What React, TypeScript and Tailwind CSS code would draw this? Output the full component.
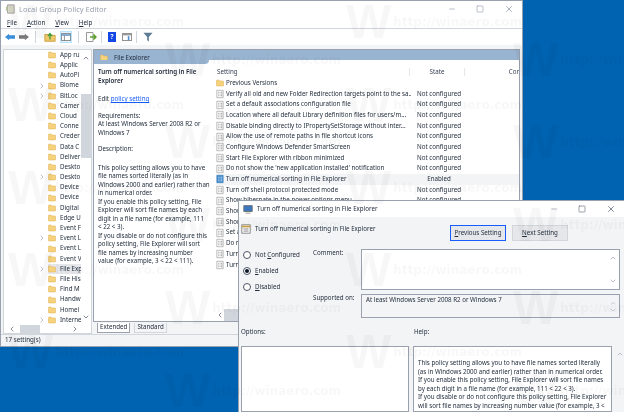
import React from 'react';
import { ChevronDown, ChevronLeft, ChevronRight, ChevronUp, Minus, Square, X } from 'lucide-react';

const treeItems = [
  ['App ru', false], ['Applic', false], ['AutoPl', false], ['Biome', true], ['BitLoc', true], ['Camer', false],
  ['Cloud', false], ['Conne', false], ['Creder', false], ['Data C', false], ['Deliver', false], ['Deskto', false],
  ['Deskto', true], ['Device', false], ['Device', false], ['Digital', false], ['Edge U', false], ['Event F', false],
  ['Event L', true], ['Event L', false], ['Event V', false], ['File Exp', true], ['File His', false], ['Find M', false],
  ['Handw', false], ['Homel', false], ['Interne', true],
] as const;

const settings = [
  ['Verify all old and new Folder Redirection targets point to the sa...', 'Not configured'],
  ['Set a default associations configuration file', 'Not configured'],
  ['Location where all default Library definition files for users/m...', 'Not configured'],
  ['Disable binding directly to IPropertySetStorage without inter...', 'Not configured'],
  ['Allow the use of remote paths in file shortcut icons', 'Not configured'],
  ['Configure Windows Defender SmartScreen', 'Not configured'],
  ['Start File Explorer with ribbon minimized', 'Not configured'],
  ["Do not show the 'new application installed' notification", 'Not configured'],
  ['Turn off numerical sorting in File Explorer', 'Enabled'],
  ['Turn off shell protocol protected mode', 'Not configured'],
  ['Show hibernate in the power options menu', 'Not configured'],
  ['Show lock in the user picture menu', 'Not configured'],
  ['Show sleep in the power options menu', 'Not configured'],
  ['Set a support web page link', 'Not configured'],
  ['Do not track Shell shortcuts during roaming', 'Not configured'],
  ['Turn off caching of thumbnail pictures', 'Not configured'],
  ['Turn off Windows Libraries features', 'Not configured'],
];

const helpLines = [
  'This policy setting allows you to have file names sorted literally',
  '(as in Windows 2000 and earlier) rather than in numerical order.',
  'If you enable this policy setting, File Explorer will sort file names',
  'by each digit in a file name (for example, 111 < 22 < 3).',
  'If you disable or do not configure this policy setting, File Explorer',
  'will sort file names by increasing number value (for example, 3 <',
  '22 < 111).',
];

const descLines = [
  'This policy setting allows you to have',
  'file names sorted literally (as in',
  'Windows 2000 and earlier) rather than',
  'in numerical order.',
  'If you enable this policy setting, File',
  'Explorer will sort file names by each',
  'digit in a file name (for example, 111',
  '< 22 < 3).',
  'If you disable or do not configure this',
  'policy setting, File Explorer will sort',
  'file names by increasing number',
  'value (for example, 3 < 22 < 111).',
];

function Folder({ className = 'w-2 h-2' }: { className?: string }) {
  return (
    <svg viewBox="0 0 16 14" className={`${className} shrink-0`}>
      <path d="M1 2.5 Q1 1 2.500 1 H6 L8 3 H14 Q15 3 15 4 V12 Q15 13 14 13 H2 Q1 13 1 12 Z" fill="#f6d27c" stroke="#dcae52" strokeWidth="1" />
    </svg>
  );
}

function PolicyIcon({ active }: { active?: boolean }) {
  return (
    <svg viewBox="0 0 14 16" className="w-2 h-2.5 shrink-0">
      <path d="M1.500 1.500 H12.500 V14.500 H1.500 Z" fill={active ? '#4a90d0' : '#fff'} stroke={active ? '#2a6fb0' : '#8a8a8a'} />
      <path d="M4 5 H6 M8 5 H11 M4 8 H6 M8 8 H11 M4 11 H6 M8 11 H11" stroke={active ? '#fff' : '#555'} />
    </svg>
  );
}

function Toolbar() {
  return (
    <div className="flex items-center h-4 pl-1 gap-1 bg-white">
      <svg viewBox="0 0 12 10" className="w-2.5 h-2.5"><path d="M0 5 L5 1 V3 H12 V7 H5 V9 Z" fill="#3a8fd8" /></svg>
      <svg viewBox="0 0 12 10" className="w-2.5 h-2.5"><path d="M12 5 L7 1 V3 H0 V7 H7 V9 Z" fill="#7a7a7a" /></svg>
      <div className="w-px h-3 bg-gray-300 ml-0.5" />
      <svg viewBox="0 0 14 12" className="w-3 h-3 ml-1"><path d="M1 3 H6 L7 4 H13 V11 H1 Z" fill="#f0c869" stroke="#c99a3a" /><path d="M7 9 V3 M4.500 5 L7 2 L9.500 5" stroke="#3d9a3d" strokeWidth="1.500" fill="none" /></svg>
      <div className="flex items-center justify-center w-3 h-3 bg-sky-100 border border-sky-200">
        <svg viewBox="0 0 12 10" className="w-2.5 h-2"><rect x="0.500" y="0.500" width="11" height="9" fill="#fff" stroke="#777" /><path d="M0 2.500 H12" stroke="#6a9bc8" strokeWidth="2" /><path d="M4 3 V10" stroke="#777" /></svg>
      </div>
      <div className="w-px h-3 bg-gray-300 ml-0.5" />
      <svg viewBox="0 0 12 12" className="w-3 h-3 ml-0.5"><path d="M1.500 1.500 H8 V10.500 H1.500 Z" fill="#fff" stroke="#999" /><path d="M5 6 H11 M8.500 3.500 L11 6 L8.500 8.500" stroke="#5aa02c" strokeWidth="1.500" fill="none" /></svg>
      <div className="w-px h-3 bg-gray-300" />
      <div className="flex items-center justify-center w-2 h-2.5 bg-blue-700 text-white font-bold ml-0.5">?</div>
      <svg viewBox="0 0 12 10" className="w-2.5 h-2 ml-0.5"><rect x="0.500" y="0.500" width="11" height="9" fill="#fff" stroke="#777" /><path d="M0 2 H12" stroke="#999" strokeWidth="2" /><path d="M8 4 V9" stroke="#4a90d0" strokeWidth="2" /></svg>
      <div className="w-px h-3 bg-gray-300" />
      <svg viewBox="0 0 12 12" className="w-2.5 h-2.5 ml-0.5"><path d="M0.500 1 H11.500 L7 6 V11.500 L5 10 V6 Z" fill="#5f7c96" /></svg>
    </div>
  );
}

function Tree() {
  return (
    <div className="flex flex-col w-[89px] bg-white border border-gray-300">
      <div className="flex flex-1 min-h-0">
        <div className="flex flex-col flex-1 min-w-0">
          {treeItems.map(([name, expandable], i) => (
            <div key={i} className="flex flex-1 items-center min-h-0">
              <div className="flex items-center justify-center w-11 pl-8 shrink-0">
                {expandable && <ChevronRight className="w-2 h-2 text-gray-400" />}
              </div>
              <div className={`flex items-center gap-1 flex-1 overflow-hidden whitespace-nowrap h-2.5 ${name === 'File Exp' ? 'bg-gray-200' : ''}`}>
                <Folder />
                <span>{name}</span>
              </div>
            </div>
          ))}
        </div>
        <div className="flex flex-col items-center w-2.5 bg-white text-gray-600">
          <ChevronUp className="w-2 h-2 mt-1" />
          <div className="w-2.5 h-16 mt-8 bg-gray-300" />
          <div className="flex-1" />
          <ChevronDown className="w-2 h-2 mb-1" />
        </div>
      </div>
      <div className="flex items-center h-2 text-gray-600 bg-white">
        <ChevronLeft className="w-2 h-2 ml-1" />
        <div className="w-5 h-2 ml-1 bg-gray-300" />
        <div className="flex-1" />
        <ChevronRight className="w-2 h-2 mr-3" />
      </div>
    </div>
  );
}

function Description() {
  return (
    <div className="flex flex-col w-[122px] shrink-0 pl-1 pt-2 text-gray-800 whitespace-nowrap">
      <p className="font-semibold">Turn off numerical sorting in File</p>
      <p className="font-semibold">Explorer</p>
      <p className="mt-2.5">Edit <span className="text-blue-600 underline">policy setting</span></p>
      <p className="mt-2">Requirements:</p>
      <p>At least Windows Server 2008 R2 or</p>
      <p>Windows 7</p>
      <p className="mt-2">Description:</p>
      <div className="mt-2.5">
        {descLines.map((line) => (
          <p key={line}>{line}</p>
        ))}
      </div>
    </div>
  );
}

function SettingsList() {
  return (
    <div className="flex flex-col flex-1 min-w-0">
      <div className="flex items-center h-3 mt-1.5 text-gray-700">
        <span className="w-[195px] pl-px">Setting</span>
        <span className="w-14 text-center border-x border-gray-200">State</span>
        <span className="pl-11">Cor</span>
      </div>
      <div className="flex flex-col h-48">
        <div className="flex flex-1 items-center gap-0.5 min-h-0">
          <Folder />
          <span>Previous Versions</span>
        </div>
        {settings.map(([name, state]) => {
          const active = state === 'Enabled';
          return (
            <div key={name} className={`flex flex-1 items-center min-h-0 whitespace-nowrap ${active ? 'bg-gray-100' : ''}`}>
              <PolicyIcon active={active} />
              <span className="w-[187px] pl-0.5 overflow-hidden">{name}</span>
              <span className="w-14 text-center">{state}</span>
            </div>
          );
        })}
      </div>
      <div className="flex-1" />
      <div className="flex items-center h-3 text-gray-600">
        <ChevronLeft className="w-2 h-2" />
        <div className="w-16 h-3 bg-gray-300" />
      </div>
    </div>
  );
}

function MainWindow() {
  return (
    <div className="absolute left-0 top-0 flex flex-col w-[523px] h-[347px] bg-gray-100 border border-gray-400 text-gray-800">
      <div className="flex items-center h-4 pl-1 gap-1 bg-white">
        <svg viewBox="0 0 12 12" className="w-2.5 h-2.5"><path d="M3 1 H11 V11 H3 Z" fill="#d8d8c8" stroke="#999" /><path d="M1 3 H3 V8 H1 Z" fill="#b8c8a0" /></svg>
        <span className="flex-1 text-gray-400 text-[7.5px]">Local Group Policy Editor</span>
        <Minus className="w-2 h-2 mr-4 text-gray-400" />
        <Square className="w-2 h-2 mr-4 text-gray-400" />
        <X className="w-2.5 h-2.5 mr-2 text-gray-400" />
      </div>
      <div className="flex items-center h-3 pl-1.5 pt-0.5 gap-2.5 bg-white border-b border-gray-300">
        <span><u>F</u>ile</span>
        <span><u>A</u>ction</span>
        <span><u>V</u>iew</span>
        <span><u>H</u>elp</span>
      </div>
      <Toolbar />
      <div className="flex flex-1 min-h-0 gap-px px-0.5 pt-1">
        <Tree />
        <div className="flex flex-col flex-1 min-w-0">
          <div className="flex flex-col flex-1 min-h-0 bg-white border border-gray-400">
            <div className="flex items-center h-2.5 bg-[#99b4d1]">
              <div className="flex items-center gap-1.5 pl-1.5 pt-1.5">
                <Folder />
                <span>File Explorer</span>
              </div>
            </div>
            <div className="w-[115px] h-1 bg-[#99b4d1] rounded-br-md" />
            <div className="flex flex-1 min-h-0 -mt-1">
              <Description />
              <SettingsList />
            </div>
          </div>
          <div className="flex items-center h-3 pl-1 gap-1">
            <span className="px-0.5 bg-white border-x border-b border-gray-400">Extended</span>
            <span className="px-0.5 border-x border-b border-gray-300">Standard</span>
          </div>
        </div>
      </div>
      <div className="flex items-center h-3 pl-1 border-t border-gray-300">17 setting(s)</div>
    </div>
  );
}

function Radio({ label, checked }: { label: React.ReactNode; checked?: boolean }) {
  return (
    <div className="flex items-center gap-1 h-2">
      <div className="flex items-center justify-center w-2 h-2 bg-white border border-gray-600 rounded-full">
        {checked && <div className="w-1 h-1 bg-gray-900 rounded-full" />}
      </div>
      <span>{label}</span>
    </div>
  );
}

function Arrows() {
  return (
    <div className="flex flex-col justify-between w-2.5 py-1 text-gray-400">
      <ChevronUp className="w-2 h-2" />
      <ChevronDown className="w-2 h-2" />
    </div>
  );
}

function PolicyDialog() {
  return (
    <div className="absolute left-[238px] top-[200px] flex flex-col w-[386px] h-[212px] bg-gray-100 border-l border-t border-gray-400 text-gray-800">
      <div className="flex items-center h-4 pl-1 gap-1 bg-white">
        <svg viewBox="0 0 12 12" className="w-2.5 h-2.5"><rect x="1" y="2" width="10" height="7" fill="#3a78c0" stroke="#666" /><path d="M3 11 H9" stroke="#888" /></svg>
        <span className="flex-1">Turn off numerical sorting in File Explorer</span>
        <Minus className="w-2 h-2 mr-4 text-gray-400" />
        <Square className="w-2 h-2 mr-4 text-gray-500" />
        <X className="w-2.5 h-2.5 mr-2 text-gray-500" />
      </div>
      <div className="flex items-center h-8 pl-0.5">
        <svg viewBox="0 0 12 12" className="w-2.5 h-2.5 mb-2"><rect x="1" y="1" width="10" height="10" fill="#fff" stroke="#777" /><path d="M1 3 H11" stroke="#c9a040" strokeWidth="2" /><path d="M3 6 H9 M3 8.500 H9" stroke="#777" /></svg>
        <span className="w-[199px] pl-1 mb-2">Turn off numerical sorting in File Explorer</span>
        <button className="w-14 h-4 bg-gray-200 border border-blue-600"><u>P</u>revious Setting</button>
        <button className="w-14 h-4 ml-1.5 bg-gray-200 border border-gray-300"><u>N</u>ext Setting</button>
      </div>
      <div className="flex h-[69px]">
        <div className="flex flex-col gap-2 w-[74px] pl-1 pt-0.5">
          <Radio label={<>Not <u>C</u>onfigured</>} />
          <Radio label={<><u>E</u>nabled</>} checked />
          <Radio label={<><u>D</u>isabled</>} />
        </div>
        <div className="flex flex-col justify-between w-12 pb-4">
          <span>Comment:</span>
          <span>Supported on:</span>
        </div>
        <div className="flex flex-col flex-1 gap-1 pr-1">
          <div className="flex justify-between flex-1 pl-1 bg-white border border-gray-400"><span /><Arrows /></div>
          <div className="flex justify-between h-6 pl-1 pt-px bg-gray-100 border border-gray-400">
            <span>At least Windows Server 2008 R2 or Windows 7</span>
            <Arrows />
          </div>
        </div>
      </div>
      <div className="flex items-center h-7 pl-0.5">
        <span className="w-[173px]">Options:</span>
        <span>Help:</span>
      </div>
      <div className="flex flex-1 min-h-0 gap-1 pl-0.5">
        <div className="w-[168px] bg-white border border-gray-400" />
        <div className="w-[199px] px-1 pt-3 overflow-hidden bg-white border border-gray-400">
          {helpLines.map((line) => (
            <p key={line} className="whitespace-nowrap">{line}</p>
          ))}
        </div>
        <ChevronUp className="w-2 h-2 mt-1 text-gray-400" />
      </div>
    </div>
  );
}

const markColumns = [
  { x: 8, tops: [-2, 81, 164, 246, 328] },
  { x: 165, tops: [36, 118, 201, 284, 367] },
  { x: 346, tops: [-2, 81, 164, 246, 328] },
  { x: 513, tops: [36, 118, 201, 284, 367] },
];

function Watermarks() {
  return (
    <>
      {markColumns.flatMap((col) =>
        col.tops.map((top) => (
          <div
            key={`${col.x}-${top}`}
            className="absolute flex items-center gap-0.5 text-black/3 font-bold pointer-events-none whitespace-nowrap"
            style={{ left: col.x, top }}
          >
            <span className="text-5xl font-['Liberation_Sans']">W</span>
            <span className="text-xs font-['DejaVu_Sans']">http://winaero.com</span>
          </div>
        )),
      )}
    </>
  );
}

export default function App() {
  return (
    <div className="relative w-screen h-screen overflow-hidden bg-[#0063b1] font-['Noto_Sans',sans-serif] text-[6.2px] leading-[8.5px] blur-[0.4px]">
      <MainWindow />
      <PolicyDialog />
      <Watermarks />
    </div>
  );
}
